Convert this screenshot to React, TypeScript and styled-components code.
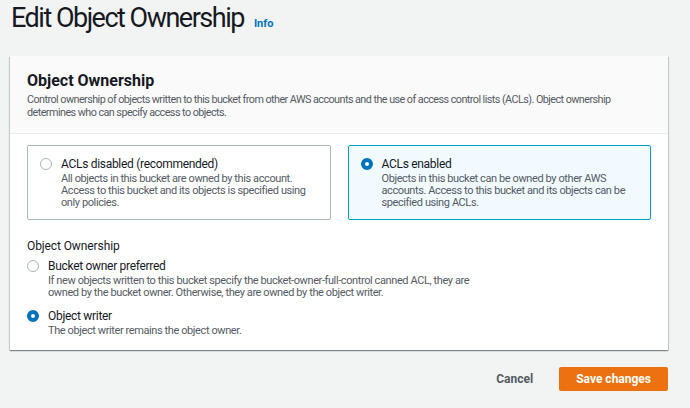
import styled, { createGlobalStyle } from "styled-components";

const GlobalStyle = createGlobalStyle`
  body {
    margin: 0;
    background: #f2f3f3;
    font-family: Roboto, "Noto Sans", Arial, sans-serif;
    color: #16191f;
  }
`;

const Page = styled.div`
  padding: 0 22px 0 10px;
`;

const Header = styled.div`
  display: flex;
  align-items: baseline;
  gap: 10px;
  padding-left: 1px;
  height: 56px;
`;

const Title = styled.h1`
  margin: 0;
  font-size: 27px;
  font-weight: 400;
  line-height: 36px;
  letter-spacing: -1.5px;
`;

const InfoLink = styled.a`
  font-size: 11px;
  font-weight: 700;
  color: #0073bb;
  text-decoration: none;
`;

const Card = styled.div`
  background: #fff;
  box-shadow: 0 1px 1px rgba(0, 28, 36, 0.3), 1px 1px 1px rgba(0, 28, 36, 0.15),
    -1px 1px 1px rgba(0, 28, 36, 0.15);
`;

const CardHeader = styled.div`
  background: #fafafa;
  border-bottom: 1px solid #eaeded;
  padding: 15px 17px 14px;
`;

const CardTitle = styled.h2`
  margin: 0 0 2px;
  font-size: 16px;
  font-weight: 700;
  line-height: 20px;
`;

const Desc = styled.p`
  margin: 0;
  font-size: 10.8px;
  line-height: 13px;
  letter-spacing: -0.55px;
  color: #545b64;
`;

const CardBody = styled.div`
  padding: 11px 17px 13px;
`;

const Tiles = styled.div`
  display: grid;
  grid-template-columns: 1fr 1fr;
  gap: 17px;
`;

const Tile = styled.div<{ $active?: boolean }>`
  display: flex;
  gap: 9px;
  height: 75px;
  box-sizing: border-box;
  padding: 9px 12px;
  border: 1px solid ${(p) => (p.$active ? "#00a1c9" : "#aab7b8")};
  background: ${(p) => (p.$active ? "#f1faff" : "#fff")};
  border-radius: 2px;
`;

const Radio = styled.span<{ $checked?: boolean }>`
  flex: none;
  box-sizing: border-box;
  width: 12px;
  height: 12px;
  margin-top: 3px;
  border-radius: 50%;
  border: ${(p) => (p.$checked ? "4px solid #0073bb" : "1px solid #aab7b8")};
  background: #fff;
`;

const OptionText = styled.div<{ $maxWidth?: number }>`
  display: flex;
  flex-direction: column;
  max-width: ${(p) => (p.$maxWidth ? `${p.$maxWidth}px` : "none")};
`;

const OptionLabel = styled.span`
  font-size: 12px;
  line-height: 18px;
  letter-spacing: -0.3px;
  color: #16191f;
`;

const OptionDesc = styled.span`
  font-size: 11px;
  line-height: 12px;
  letter-spacing: -0.4px;
  color: #545b64;
`;

const FieldLabel = styled.div`
  margin-top: 17px;
  margin-bottom: 2px;
  font-size: 12px;
  line-height: 18px;
  letter-spacing: -0.1px;
`;

const RadioGroup = styled.div`
  display: flex;
  flex-direction: column;
  gap: 8px;
`;

const RadioRow = styled.label`
  display: flex;
  gap: 9px;
`;

const Footer = styled.div`
  display: flex;
  justify-content: flex-end;
  align-items: center;
  gap: 26px;
  padding-top: 17px;
`;

const Button = styled.button<{ $primary?: boolean }>`
  font-family: inherit;
  font-size: 12px;
  font-weight: 700;
  height: 24px;
  padding: 0 ${(p) => (p.$primary ? "17px" : "0")};
  border: none;
  border-radius: 2px;
  background: ${(p) => (p.$primary ? "#ec7211" : "transparent")};
  color: ${(p) => (p.$primary ? "#fff" : "#545b64")};
`;

const tiles = [
  {
    label: "ACLs disabled (recommended)",
    desc: "All objects in this bucket are owned by this account. Access to this bucket and its objects is specified using only policies.",
    active: false,
  },
  {
    label: "ACLs enabled",
    desc: "Objects in this bucket can be owned by other AWS accounts. Access to this bucket and its objects can be specified using ACLs.",
    active: true,
  },
];

const owners = [
  {
    label: "Bucket owner preferred",
    desc: "If new objects written to this bucket specify the bucket-owner-full-control canned ACL, they are owned by the bucket owner. Otherwise, they are owned by the object writer.",
    checked: false,
  },
  {
    label: "Object writer",
    desc: "The object writer remains the object owner.",
    checked: true,
  },
];

export default function App() {
  return (
    <>
      <GlobalStyle />
      <Page>
        <Header>
          <Title>Edit Object Ownership</Title>
          <InfoLink href="#">Info</InfoLink>
        </Header>
        <Card>
          <CardHeader>
            <CardTitle>Object Ownership</CardTitle>
            <Desc>
              Control ownership of objects written to this bucket from other AWS accounts and the use
              of access control lists (ACLs). Object ownership determines who can specify access to
              objects.
            </Desc>
          </CardHeader>
          <CardBody>
            <Tiles>
              {tiles.map((t) => (
                <Tile key={t.label} $active={t.active}>
                  <Radio $checked={t.active} />
                  <OptionText>
                    <OptionLabel>{t.label}</OptionLabel>
                    <OptionDesc>{t.desc}</OptionDesc>
                  </OptionText>
                </Tile>
              ))}
            </Tiles>
            <FieldLabel>Object Ownership</FieldLabel>
            <RadioGroup>
              {owners.map((o) => (
                <RadioRow key={o.label}>
                  <Radio $checked={o.checked} />
                  <OptionText $maxWidth={440}>
                    <OptionLabel>{o.label}</OptionLabel>
                    <OptionDesc>{o.desc}</OptionDesc>
                  </OptionText>
                </RadioRow>
              ))}
            </RadioGroup>
          </CardBody>
        </Card>
        <Footer>
          <Button>Cancel</Button>
          <Button $primary>Save changes</Button>
        </Footer>
      </Page>
    </>
  );
}
